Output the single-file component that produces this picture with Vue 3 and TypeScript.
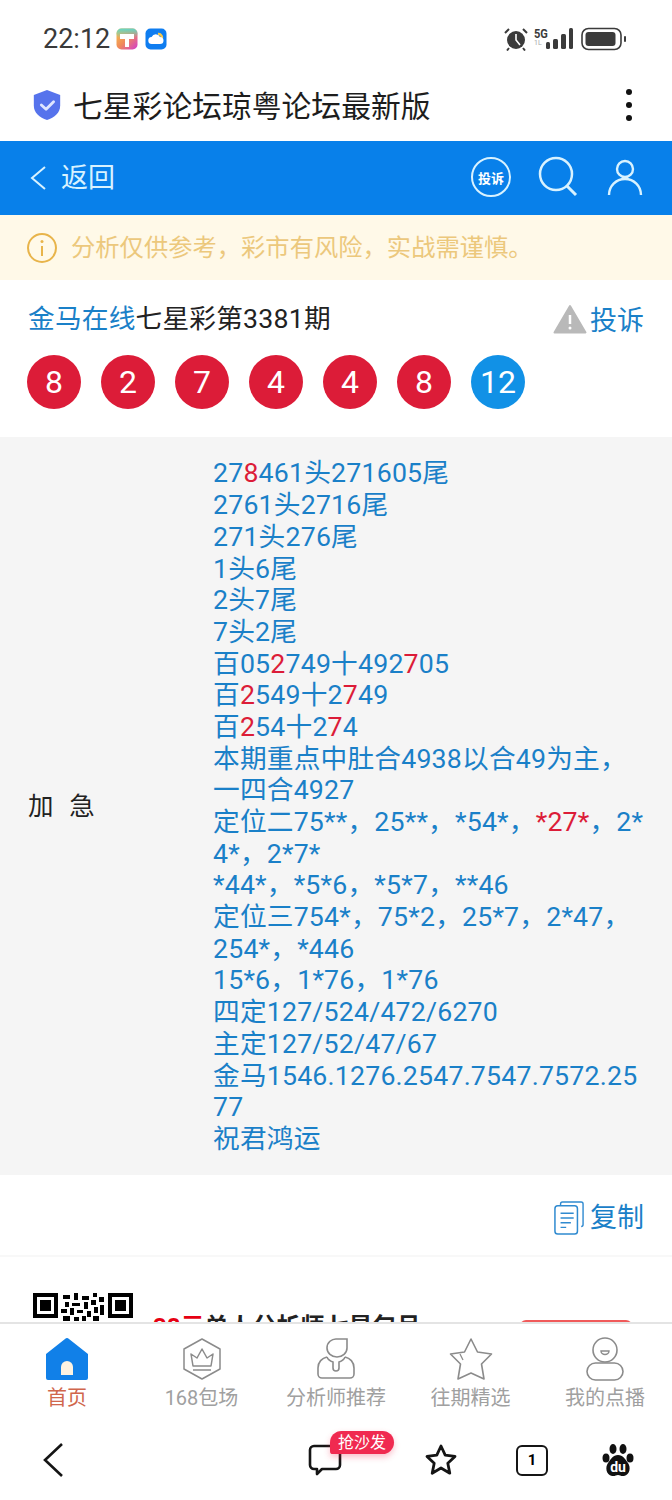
<script setup lang="ts">
type Seg = { t: string; red?: boolean };
const balls = ['8', '2', '7', '4', '4', '8'];
const raw = [
  '27[8]461头271605尾',
  '2761头2716尾',
  '271头276尾',
  '1头6尾',
  '2头7尾',
  '7头2尾',
  '百05[2]749十492[7]05',
  '百[2]549十2[7]49',
  '百[2]54十2[7]4',
  '本期重点中肚合4938以合49为主，',
  '一四合4927',
  '定位二75**，25**，*54*，[*27*]，2*',
  '4*，2*7*',
  '*44*，*5*6，*5*7，**46',
  '定位三754*，75*2，25*7，2*47，',
  '254*，*446',
  '15*6，1*76，1*76',
  '四定127/524/472/6270',
  '主定127/52/47/67',
  '金马1546.1276.2547.7547.7572.25',
  '77',
  '祝君鸿运',
];
const lines: Seg[][] = raw.map((r) => {
  const segs: Seg[] = [];
  r.split(/(\[[^\]]+\])/).forEach((p) => {
    if (!p) return;
    if (p.startsWith('[')) segs.push({ t: p.slice(1, -1), red: true });
    else segs.push({ t: p });
  });
  return segs;
});
const tabs = ['首页', '168包场', '分析师推荐', '往期精选', '我的点播'];
</script>

<template>
  <div class="page">
    <div class="status">
      <span class="time">22:12</span>
      <svg class="app" width="22" height="22" viewBox="0 0 22 22">
        <defs>
          <linearGradient id="g1" x1="0" y1="0" x2="1" y2="1">
            <stop offset="0" stop-color="#f7c84a" />
            <stop offset="0.5" stop-color="#f08a5a" />
            <stop offset="1" stop-color="#d23ad0" />
          </linearGradient>
          <linearGradient id="g2" x1="0" y1="0" x2="0" y2="1">
            <stop offset="0" stop-color="#5fd6c8" />
            <stop offset="1" stop-color="#5fd6c8" stop-opacity="0" />
          </linearGradient>
        </defs>
        <rect width="21" height="21" x="0.5" y="0.5" rx="5" fill="url(#g1)" />
        <rect width="21" height="10" x="0.5" y="0.5" rx="5" fill="url(#g2)" />
        <path d="M4 6h14v5h-5v8h-4v-8H4z" fill="#fff" />
      </svg>
      <svg class="app" width="22" height="22" viewBox="0 0 22 22">
        <rect x="0.5" y="0.5" width="21" height="21" rx="5" fill="#0f7df0" />
        <path d="M13 6a3.600 3.600 0 0 1 4 4" stroke="#f7c84a" stroke-width="2.400" fill="none" />
        <path d="M7 16a3.500 3.500 0 0 1-.4-7A4.600 4.600 0 0 1 15 9a3.500 3.500 0 0 1 0 7z" fill="#fff" />
      </svg>
      <span class="grow"></span>
      <svg width="24" height="24" viewBox="0 0 24 24" class="alarm">
        <circle cx="12" cy="13" r="9" fill="#3b3b3b" />
        <path d="M12 7v6l4 5" stroke="#fff" stroke-width="1.600" fill="none" />
        <path d="M1 6l4-4M23 6l-4-4M5 21l-2 2.500M19 21l2 2.500" stroke="#3b3b3b" stroke-width="2" fill="none" />
      </svg>
      <div class="net">
        <span class="fiveg">5G</span>
        <span class="hd">1L</span>
      </div>
      <svg width="28" height="22" viewBox="0 0 28 22" class="signal">
        <rect x="0" y="14" width="4" height="7" rx="1.500" fill="#3b3b3b" />
        <rect x="7" y="11" width="5" height="10" rx="1.500" fill="#3b3b3b" />
        <rect x="15" y="6" width="5" height="15" rx="1.500" fill="#3b3b3b" />
        <rect x="23" y="0" width="4" height="21" rx="1.500" fill="#3b3b3b" />
      </svg>
      <svg width="45" height="24" viewBox="0 0 45 24" class="battery">
        <rect x="1" y="1.500" width="39" height="21" rx="6.500" fill="none" stroke="#3b3b3b" stroke-width="1.600" />
        <rect x="4.500" y="5" width="30" height="14" rx="3" fill="#3b3b3b" />
        <rect x="43" y="9" width="2" height="6" rx="1" fill="#3b3b3b" />
      </svg>
    </div>

    <div class="browser">
      <svg width="32" height="32" viewBox="0 0 32 34" class="shield">
        <path d="M16 1l14 5.500v11c0 8-6 12.500-14 15.500C8 30 2 25.500 2 17.500v-11z" fill="#5673ec" />
        <path d="M10 17l5 4.500 8-8" stroke="#dfe6ff" stroke-width="3" fill="none" stroke-linecap="round" stroke-linejoin="round" />
      </svg>
      <span class="b-title">七星彩论坛琼粤论坛最新版</span>
      <div class="dots"><i></i><i></i><i></i></div>
    </div>

    <div class="nav">
      <svg width="18" height="26" viewBox="0 0 18 26" class="nav-back">
        <path d="M16 2L3 13l13 11" stroke="#d8f2ff" stroke-width="2" fill="none" />
      </svg>
      <span class="nav-text">返回</span>
      <span class="grow"></span>
      <div class="tousu"><span>投诉</span></div>
      <svg width="40" height="42" viewBox="0 0 40 42" class="nav-search">
        <circle cx="18" cy="18" r="16" stroke="#d8f2ff" stroke-width="2.500" fill="none" />
        <path d="M29 30l9 9" stroke="#d8f2ff" stroke-width="3" fill="none" />
      </svg>
      <svg width="36" height="38" viewBox="0 0 36 38" class="nav-user">
        <circle cx="18" cy="10" r="8" stroke="#d8f2ff" stroke-width="2.400" fill="none" />
        <path d="M2 36c0-9 7-16 16-16s16 7 16 16" stroke="#d8f2ff" stroke-width="2.400" fill="none" />
      </svg>
    </div>

    <div class="notice">
      <svg width="32" height="32" viewBox="0 0 32 32">
        <circle cx="16" cy="16" r="14" stroke="#e8b44a" stroke-width="2" fill="none" />
        <path d="M16 14v10" stroke="#e8b44a" stroke-width="2" />
        <circle cx="16" cy="9.500" r="1.500" fill="#e8b44a" />
      </svg>
      <span class="notice-text">分析仅供参考，彩市有风险，实战需谨慎。</span>
    </div>

    <div class="head">
      <div class="head-row">
        <div class="head-title"><span class="blue">金马在线</span>七星彩第3381期</div>
        <svg width="34" height="30" viewBox="0 0 34 30" class="warn">
          <path d="M17 2L32.500 28.500H1.500z" fill="#b9b9b9" stroke="#b9b9b9" stroke-width="2" stroke-linejoin="round" />
          <path d="M17 11v9" stroke="#fff" stroke-width="2.500" />
          <circle cx="17" cy="24" r="1.500" fill="#fff" />
        </svg>
        <span class="blue report">投诉</span>
      </div>
      <div class="balls">
        <span v-for="(b, i) in balls" :key="i" class="ball">{{ b }}</span>
        <span class="ball special">12</span>
      </div>
    </div>

    <div class="table">
      <div class="label">加&nbsp;&nbsp;急</div>
      <div class="content">
        <div v-for="(l, i) in lines" :key="i" class="line">
          <span v-for="(s, j) in l" :key="j" class="seg" :class="{ red: s.red }">{{ s.t }}</span>
        </div>
      </div>
    </div>

    <div class="copy-row">
      <svg width="30" height="34" viewBox="0 0 32 36" class="copy-icon">
        <path d="M7 4.500V3a2 2 0 0 1 2-2h20a2 2 0 0 1 2 2v22a2 2 0 0 1-2 2" stroke="#2f8ad0" stroke-width="1.500" fill="none" />
        <rect x="1" y="5" width="24" height="30" rx="3" stroke="#2f8ad0" stroke-width="1.600" fill="#fff" />
        <path d="M7 13h14M7 18h14M7 23h11M7 28h6" stroke="#2f8ad0" stroke-width="1.500" />
      </svg>
      <span class="blue copy-text">复制</span>
    </div>

    <div class="promo">
      <svg class="qr" width="100" height="40" viewBox="0 0 100 40">
        <path fill-rule="evenodd" d="M0 0h25v25H0zM4 4v17h17V4zM7 7h11v11H7zM75 0h25v25H75zM79 4v17h17V4zM82 7h11v11H82z" fill="#000" />
        <path d="M30 2h7v4h-7zM41 0h4v7h-4zM49 3h7v4h-7zM60 0h4v4h-4zM66 4h5v5h-5zM32 9h4v5h-4zM39 10h8v3h-8zM51 9h4v7h-4zM58 7h5v5h-5zM28 16h6v4h-6zM37 15h4v7h-4zM44 17h6v3h-6zM54 18h4v6h-4zM61 14h4v6h-4zM67 12h4v10h-4zM30 23h7v5h-7zM41 24h5v4h-5zM49 23h4v5h-4zM60 23h6v5h-6zM6 30h8v3H6zM20 30h6v3h-6zM36 30h5v3h-5zM48 30h3v3h-3zM58 30h5v3h-5zM78 30h4v3h-4zM86 30h3v3h-3z" fill="#000" />
      </svg>
      <span class="promo-text"><span class="promo-red">38元</span>单人分析师七星包月</span>
      <span class="grow"></span>
      <span class="promo-btn"></span>
    </div>

    <div class="bottom">
      <div class="tabs">
        <div v-for="(t, i) in tabs" :key="t" class="tab" :class="{ active: i === 0 }">
          <svg v-if="i === 0" width="44" height="44" viewBox="0 0 44 44">
            <path d="M20 2a3 3 0 0 1 4 0L43 17v24a2 2 0 0 1-2 2H3a2 2 0 0 1-2-2V17z" fill="#1180e8" />
            <path d="M16 38v-8a6 6 0 0 1 12 0v8z" fill="#fdf3e2" />
          </svg>
          <svg v-else-if="i === 1" width="44" height="44" viewBox="0 0 44 44">
            <path d="M22 2l18 10v20L22 42 4 32V12z" stroke="#8b8b8b" stroke-width="1.500" fill="none" stroke-linejoin="round" />
            <path d="M11 17l6 4 5-9 5 9 6-4-2 12H13zM13 33h18" stroke="#8b8b8b" stroke-width="1.500" fill="none" stroke-linejoin="round" />
          </svg>
          <svg v-else-if="i === 2" width="44" height="44" viewBox="0 0 44 44">
            <path d="M23 2h10v9a10 9 0 0 1-20 0a9 9 0 0 1 10-9z" stroke="#8b8b8b" stroke-width="1.600" fill="none" />
            <path d="M13 20c-5 1-9 5-9 11v6a4 4 0 0 0 4 4h28a4 4 0 0 0 4-4v-6c0-6-4-10-9-11" stroke="#8b8b8b" stroke-width="1.600" fill="none" />
            <path d="M13 20c1 3 3 4 6 5v6a3 3 0 0 0 6 0v-6c3-1 5-2 6-5" stroke="#8b8b8b" stroke-width="1.600" fill="none" />
          </svg>
          <svg v-else-if="i === 3" width="44" height="44" viewBox="0 0 44 44">
            <path d="M22 2l6.500 13 14 2-10 10 2.500 15L22 36l-13 6 2.500-15-10-10 14-2z" stroke="#8b8b8b" stroke-width="1.600" fill="none" stroke-linejoin="round" />
            <path d="M11 17l3 6" stroke="#8b8b8b" stroke-width="1.200" fill="none" />
          </svg>
          <svg v-else width="44" height="44" viewBox="0 0 44 44">
            <circle cx="22" cy="13" r="12" stroke="#8b8b8b" stroke-width="1.600" fill="none" />
            <path d="M18 14h8a4 3.500 0 0 1-8 0z" fill="none" stroke="#8b8b8b" stroke-width="1.400" />
            <rect x="4" y="26" width="36" height="17" rx="8.500" stroke="#8b8b8b" stroke-width="1.600" fill="none" />
          </svg>
          <span class="tab-text">{{ t }}</span>
        </div>
      </div>

      <div class="sys">
        <svg width="24" height="36" viewBox="0 0 24 36" class="sys-back">
          <path d="M21 2L4 18l17 16" stroke="#151515" stroke-width="2.600" fill="none" />
        </svg>
        <span class="grow"></span>
        <div class="comment">
          <svg width="34" height="32" viewBox="0 0 34 32">
            <path d="M6 2h22a4 4 0 0 1 4 4v15a4 4 0 0 1-4 4H14l-5 5v-5H6a4 4 0 0 1-4-4V6a4 4 0 0 1 4-4z" stroke="#151515" stroke-width="2.600" fill="none" stroke-linejoin="round" />
          </svg>
          <span class="sofa">抢沙发</span>
        </div>
        <svg width="34" height="34" viewBox="0 0 34 34" class="sys-star">
          <path d="M17 3l4.200 9.200 9.800 1.200-7.200 6.800 2 10L17 25l-8.800 5.200 2-10L3 13.400l9.800-1.200z" stroke="#151515" stroke-width="2.800" fill="none" stroke-linejoin="round" />
        </svg>
        <div class="tabs-count">1</div>
        <svg width="32" height="34" viewBox="0 0 32 34" class="paw">
          <ellipse cx="4" cy="15" rx="3.500" ry="4.500" fill="#111" />
          <ellipse cx="11" cy="6" rx="3.500" ry="5" fill="#111" />
          <ellipse cx="21" cy="6" rx="3.500" ry="5" fill="#111" />
          <ellipse cx="28" cy="15" rx="3.500" ry="4.500" fill="#111" />
          <path d="M16 12c5 0 7 4 10 8 3 4 2 12-4 13-3 .5-4-1-6-1s-3 1.500-6 1c-6-1-7-9-4-13 3-4 5-8 10-8z" fill="#111" />
          <text x="16" y="29" text-anchor="middle" class="du">du</text>
        </svg>
      </div>
    </div>
  </div>
</template>

<style>
html, body { margin: 0; padding: 0; background: #fff; }
</style>

<style scoped>
.page {
  width: 672px;
  height: 1500px;
  display: flex;
  flex-direction: column;
  background: #fff;
  overflow: hidden;
  font-family: Roboto, "Noto Sans CJK SC", sans-serif;
}
.grow { flex: 1; }
.blue { color: #1a80c8; }

.status {
  height: 78px;
  flex: none;
  display: flex;
  align-items: center;
  padding: 0 46px 0 43px;
  box-sizing: border-box;
}
.time { font-size: 27px; color: #3a3a3a; margin-right: 6px; }
.app { margin-right: 7px; }
.alarm { margin-right: 6px; }
.net { width: 15px; display: flex; flex-direction: column; line-height: 1; margin-bottom: 4px; }
.fiveg { font-size: 13px; font-weight: 700; color: #3b3b3b; transform: scaleX(0.85); transform-origin: left; }
.hd { font-size: 7px; color: #aaa; }
.signal { margin-left: -3px; margin-right: 7px; }

.browser {
  height: 63px;
  flex: none;
  display: flex;
  align-items: center;
  padding: 0 40px 9px 31px;
  box-sizing: border-box;
}
.shield { margin-right: 10px; }
.b-title { font-size: 29.800px; color: #1d1d1d; flex: 1; white-space: nowrap; margin-bottom: 3px; }
.dots { display: flex; flex-direction: column; gap: 7px; }
.dots i { display: block; width: 6px; height: 6px; border-radius: 50%; background: #111; }

.nav {
  height: 74px;
  flex: none;
  background: #0880ea;
  display: flex;
  align-items: center;
  padding: 0 29px 0 29px;
  box-sizing: border-box;
}
.nav-back { margin-right: 14px; }
.nav-text { font-size: 27px; color: #d8f2ff; margin-bottom: 5px; }
.tousu {
  width: 40px;
  height: 40px;
  box-sizing: border-box;
  border: 2.500px solid #d8f2ff;
  border-radius: 50%;
  display: flex;
  align-items: center;
  justify-content: center;
  margin-right: 27px;
  margin-bottom: 2px;
}
.tousu span { font-size: 13px; font-weight: 700; color: #fff; white-space: nowrap; }
.nav-search { margin-right: 29px; margin-bottom: 2px; }

.notice {
  height: 65px;
  flex: none;
  background: #fff9e8;
  display: flex;
  align-items: center;
  padding-left: 26px;
  gap: 13px;
  color: #ecc87c;
  font-size: 24.300px;
}
.notice-text { margin-bottom: 5px; white-space: nowrap; }
.head { height: 157px; flex: none; padding: 0 28px; box-sizing: border-box; }
.head-row { display: flex; align-items: center; height: 78px; }
.head-title { flex: 1; font-size: 26.700px; letter-spacing: 0.2px; color: #222; margin-bottom: 5px; }
.warn { margin-right: 3px; margin-left: 1px; }
.report { font-size: 27px; margin-bottom: 2px; }
.balls { display: flex; gap: 20px; margin-top: -3px; margin-left: -1px; }
.ball {
  width: 54px;
  height: 54px;
  border-radius: 50%;
  background: #dc1c38;
  color: #fff;
  font-size: 32px;
  display: flex;
  align-items: center;
  justify-content: center;
}
.ball.special { background: #1191e6; }

.table {
  flex: none;
  display: flex;
  align-items: center;
  background: #f5f5f5;
  height: 738px;
}
.label { width: 213px; padding-left: 28px; box-sizing: border-box; font-size: 25.500px; letter-spacing: 1px; color: #222; margin-bottom: 5px; }
.content { flex: 1; font-size: 26.700px; letter-spacing: 0.2px; color: #1a80c8; margin-top: 2px; }
.line { white-space: nowrap; height: 31.700px; line-height: 31.700px; }
.seg { display: inline-block; line-height: 31.700px; height: 31.700px; vertical-align: top; }
.red { color: #dc1c38; }

.copy-row {
  height: 82px;
  flex: none;
  display: flex;
  align-items: center;
  justify-content: flex-end;
  padding-right: 28px;
  border-bottom: 2px solid #f8f8f8;
  box-sizing: border-box;
}
.copy-icon { margin-right: 6px; margin-top: 6px; }
.copy-text { font-size: 27px; margin-top: 1px; }

.promo {
  height: 65px;
  flex: none;
  display: flex;
  align-items: flex-start;
  padding: 36px 40px 0 33px;
  box-sizing: border-box;
  overflow: hidden;
}
.qr { flex: none; }
.promo-text { font-size: 24px; font-weight: 700; color: #222; margin-left: 20px; margin-top: 14px; white-space: nowrap; }
.promo-red { color: #e60012; }
.promo-btn { width: 112px; height: 40px; background: #f05a5a; border-radius: 6px; margin-top: 27px; }

.bottom { flex: none; height: 178px; background: #fff; border-top: 2px solid #e4e4e4; box-sizing: border-box; }
.tabs { display: flex; justify-content: space-between; height: 96px; padding: 13px 27px 0 27px; box-sizing: border-box; }
.tab { width: 80px; display: flex; flex-direction: column; align-items: center; white-space: nowrap; }
.tab-text { font-size: 20px; line-height: 28px; color: #a0a0a0; margin-top: 3px; }
.tab.active .tab-text { color: #d0664c; }

.sys { display: flex; align-items: center; height: 80px; padding: 0 38px 0 41px; box-sizing: border-box; }
.comment { position: relative; margin-right: 82px; display: flex; }
.sofa {
  position: absolute;
  left: 22px;
  top: -13px;
  background: #f02a50;
  color: #fff;
  font-size: 16px;
  line-height: 23px;
  padding: 0 8px;
  border-radius: 12px 12px 12px 3px;
  white-space: nowrap;
  box-shadow: 0 3px 6px rgba(240, 42, 80, 0.3);
}
.sys-star { margin-right: 58px; }
.tabs-count {
  width: 32px;
  height: 31px;
  box-sizing: border-box;
  border: 2.600px solid #151515;
  border-radius: 6px;
  font-size: 15px;
  font-weight: 700;
  display: flex;
  align-items: center;
  justify-content: center;
  margin-right: 54px;
}
.du { font-size: 14px; font-weight: 700; fill: #fff; }
</style>
